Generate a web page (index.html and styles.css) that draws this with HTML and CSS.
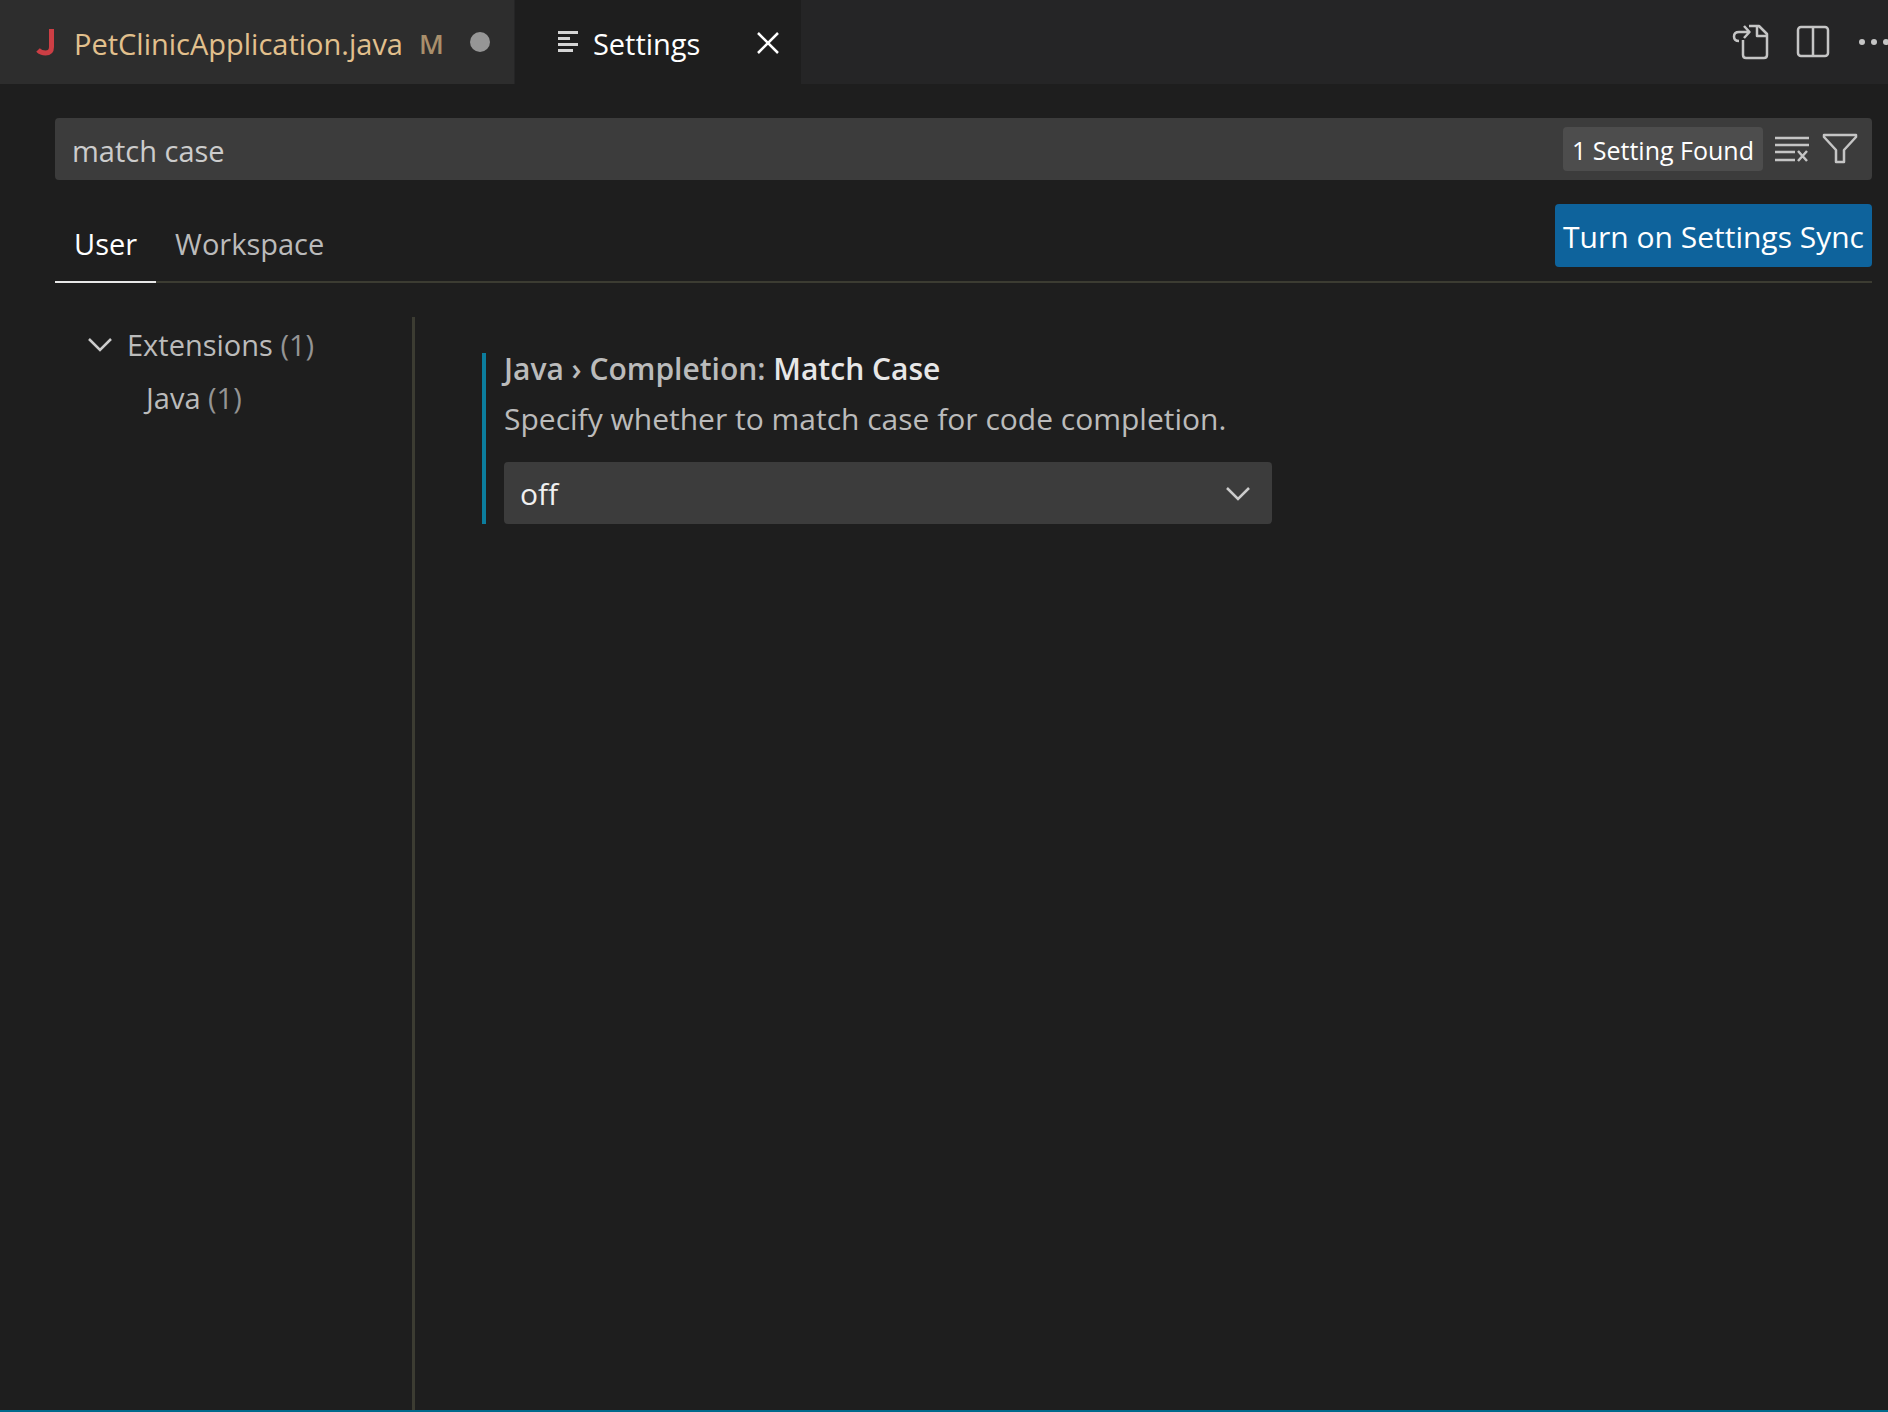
FILE: index.html
```html
<!DOCTYPE html>
<html lang="en">
<head>
    <meta charset="UTF-8">
    <meta name="viewport" content="width=device-width, initial-scale=1.0">
    <title>Settings</title>
    <link rel="stylesheet" href="styles.css">
</head>
<body>
    <header class="title-bar">
        <div class="tab">
            <svg class="java-icon" viewBox="0 0 20 30" aria-hidden="true">
                <path d="M15.500 2V20Q15.500 26 9.500 26Q5 26 2 23"/>
            </svg>
            <a href="#" class="tab-name">PetClinicApplication.java</a>
            <span class="git-state">M</span>
            <span class="unsaved-dot"></span>
        </div>
        <div class="tab active">
            <svg class="list-icon" viewBox="0 0 20 22" aria-hidden="true">
                <path d="M0 1.500H20M0 7.500H12M0 13.500H20M0 19.500H15"/>
            </svg>
            <a href="#" class="tab-name">Settings</a>
            <button class="icon-button" aria-label="Close">
                <svg class="icon close-icon" viewBox="0 0 38 38"><path d="M9 8L29 28M29 8L9 28"/></svg>
            </button>
        </div>
        <div class="actions">
            <button class="icon-button" aria-label="Open Settings (JSON)">
                <svg class="icon" viewBox="0 0 38 38">
                    <path d="M17 4H27L35 12V33Q35 36 32 36H14Q11 36 11 33V18M25 4V14H35"/>
                    <path d="M7 19Q2 19 2 14.500Q2 10 7 10H17M12 4L17.500 10L12 16"/>
                </svg>
            </button>
            <button class="icon-button" aria-label="Split Editor">
                <svg class="icon" viewBox="0 0 38 38">
                    <rect x="4" y="5" width="30" height="29" rx="3"/>
                    <path d="M19 5V34"/>
                </svg>
            </button>
            <button class="icon-button" aria-label="More Actions">
                <svg class="icon dots" viewBox="0 0 38 38">
                    <circle cx="6" cy="20" r="3"/><circle cx="18" cy="20" r="3"/><circle cx="30" cy="20" r="3"/>
                </svg>
            </button>
        </div>
    </header>

    <main class="settings">
        <div class="search">
            <input type="text" class="search-input" value="match case" aria-label="Search settings">
            <span class="count">1 Setting Found</span>
            <button class="icon-button" aria-label="Clear Settings Search Input">
                <svg class="icon" viewBox="0 0 38 38">
                    <path d="M2 8H36M2 15H36M2 22H22M2 30H22M25 21L34 31M34 21L25 31"/>
                </svg>
            </button>
            <button class="icon-button" aria-label="Filter Settings">
                <svg class="icon" viewBox="0 0 38 38">
                    <path d="M3 5H35V7L23 20V32H15V20L3 7Z"/>
                </svg>
            </button>
        </div>

        <div class="scope-bar">
            <nav class="scopes">
                <a href="#" class="scope selected">User</a>
                <a href="#" class="scope">Workspace</a>
            </nav>
            <button class="sync-button">Turn on Settings Sync</button>
        </div>

        <div class="content">
            <nav class="toc">
                <a href="#" class="toc-row">
                    <svg class="chevron" viewBox="0 0 26 16" aria-hidden="true"><path d="M2 2L13 13L24 2"/></svg>
                    <span>Extensions <span class="toc-count">(1)</span></span>
                </a>
                <a href="#" class="toc-row child">
                    <span>Java <span class="toc-count">(1)</span></span>
                </a>
            </nav>
            <section class="results">
                <div class="setting">
                    <label class="setting-title" for="matchCase">Java › Completion: <span class="setting-name">Match Case</span></label>
                    <p class="description">Specify whether to match case for code completion.</p>
                    <div class="select-wrap">
                        <select id="matchCase">
                            <option selected>off</option>
                            <option>firstLetter</option>
                        </select>
                        <svg class="chevron select-arrow" viewBox="0 0 26 16" aria-hidden="true"><path d="M2 2L13 13L24 2"/></svg>
                    </div>
                </div>
            </section>
        </div>
    </main>
    <footer class="status-bar"></footer>
</body>
</html>
```

FILE: styles.css
```css
* {
    box-sizing: border-box;
}
body {
    margin: 0;
    min-height: 100vh;
    display: flex;
    flex-direction: column;
    background-color: #1e1e1e;
    color: #bbbbbb;
    font-family: "Open Sans", "Noto Sans", sans-serif;
    font-size: 29px;
    line-height: 40px;
}
a {
    color: inherit;
    text-decoration: none;
}
button, input, select {
    font: inherit;
    border: none;
    margin: 0;
}
.icon-button {
    display: flex;
    padding: 0;
    background: none;
    cursor: pointer;
}
.icon {
    width: 38px;
    height: 38px;
    fill: none;
    stroke: #c5c5c5;
    stroke-width: 2.500;
    stroke-linejoin: round;
}

/* editor tabs */
.title-bar {
    display: flex;
    height: 84px;
    overflow: hidden;
    background-color: #252526;
}
.tab {
    display: flex;
    align-items: center;
    padding: 4px 24px 0 36px;
    background-color: #2d2d2d;
    color: #e2c08d;
}
.tab.active {
    padding: 4px 14px 0 43px;
    background-color: #1e1e1e;
    color: #ffffff;
    border-left: 1px solid #252526;
}
.java-icon {
    width: 20px;
    height: 30px;
    margin: 0 18px 4px 0;
    fill: none;
    stroke: #cc3e44;
    stroke-width: 5;
}
.git-state {
    margin-left: 16px;
    font-size: 27px;
    font-weight: 600;
    color: #a98f6b;
}
.unsaved-dot {
    width: 20px;
    height: 20px;
    margin: 0 0 4px 26px;
    border-radius: 50%;
    background-color: #969696;
}
.list-icon {
    width: 20px;
    height: 22px;
    margin: 0 15px 4px 0;
    fill: none;
    stroke: #d4d4d4;
    stroke-width: 3;
}
.tab .icon-button {
    margin-left: 49px;
}
.close-icon {
    stroke: #ffffff;
}
.actions {
    display: flex;
    align-items: center;
    gap: 24px;
    margin-left: auto;
    margin-right: -6px;
    padding-bottom: 2px;
}
.dots {
    fill: #c5c5c5;
    stroke: none;
}

/* settings editor */
.settings {
    flex: 1;
    display: flex;
    flex-direction: column;
    padding: 34px 16px 0 55px;
}
.search {
    display: flex;
    align-items: center;
    gap: 10px;
    height: 62px;
    padding: 0 13px 0 17px;
    border-radius: 4px;
    background-color: #3c3c3c;
}
.search-input {
    flex: 1;
    min-width: 0;
    padding: 4px 0 0;
    background: none;
    color: #cccccc;
    outline: none;
}
.count {
    padding: 3px 9px 1px;
    border-radius: 4px;
    background-color: #4d4d4d;
    color: #ffffff;
    font-size: 25px;
}
.scope-bar {
    display: flex;
    justify-content: space-between;
    align-items: flex-end;
    height: 103px;
    border-bottom: 2px solid #3c3c32;
}
.scopes {
    display: flex;
}
.scope {
    height: 59px;
    margin-bottom: -2px;
    padding: 0 19px;
    border-bottom: 2px solid transparent;
}
.scope.selected {
    border-bottom-color: #e7e7e7;
    color: #ffffff;
}
.sync-button {
    height: 63px;
    margin-bottom: 14px;
    padding: 2px 8px 0;
    border-radius: 4px;
    background-color: #0e639c;
    color: #ffffff;
    font-size: 30px;
    cursor: pointer;
}
.content {
    flex: 1;
    display: flex;
    margin-top: 34px;
}
.toc {
    width: 360px;
    border-right: 3px solid #3c3c32;
}
.toc-row {
    display: flex;
    align-items: center;
    height: 53px;
    padding: 2px 0 0 32px;
}
.toc-row.child {
    padding-left: 91px;
}
.toc-count {
    color: #949494;
}
.chevron {
    width: 26px;
    height: 16px;
    margin-right: 14px;
    fill: none;
    stroke: #cccccc;
    stroke-width: 2.500;
}
.results {
    flex: 1;
    padding: 36px 0 0 67px;
}
.setting {
    max-width: 790px;
    padding-left: 18px;
    border-left: 4px solid #0c7d9d;
    font-size: 30px;
    line-height: 32px;
}
.setting-title {
    display: block;
    height: 50px;
    font-weight: 600;
}
.setting-name {
    color: #e7e7e7;
}
.description {
    margin: 0 0 27px;
    white-space: nowrap;
}
.select-wrap {
    position: relative;
}
.select-wrap select {
    display: block;
    width: 100%;
    height: 62px;
    padding: 2px 16px 0;
    border-radius: 4px;
    appearance: none;
    background-color: #3c3c3c;
    color: #f0f0f0;
}
.select-arrow {
    position: absolute;
    right: 21px;
    top: 24px;
    margin: 0;
    pointer-events: none;
}
.status-bar {
    height: 2px;
    background-color: #006a8c;
}
```
